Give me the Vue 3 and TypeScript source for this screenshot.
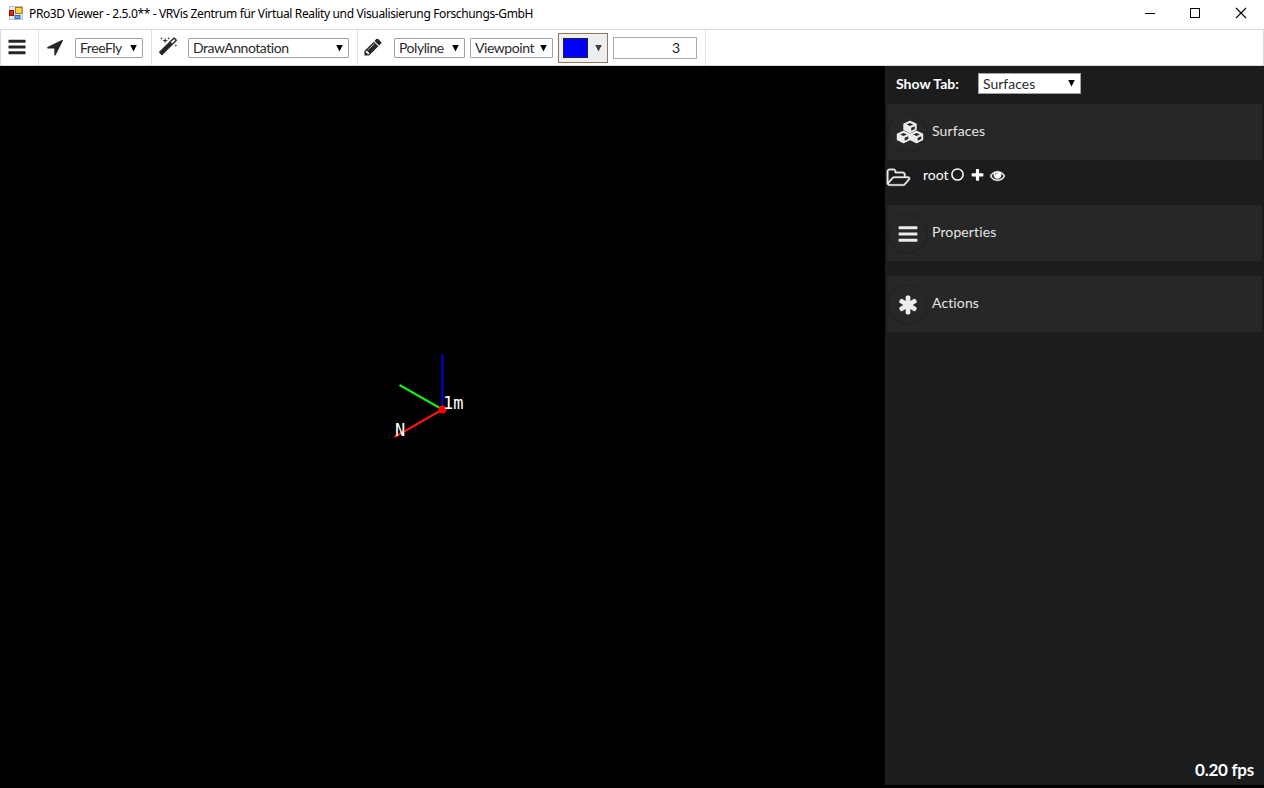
<script setup lang="ts">
interface Picker { label: string; width: number }
interface Section { title: string; icon: 'cubes' | 'bars' | 'asterisk' }

const title = 'PRo3D Viewer - 2.5.0** - VRVis Zentrum für Virtual Reality und Visualisierung Forschungs-GmbH'
const navigation: Picker = { label: 'FreeFly', width: 68 }
const interaction: Picker = { label: 'DrawAnnotation', width: 161 }
const drawing: Picker[] = [
  { label: 'Polyline', width: 71 },
  { label: 'Viewpoint', width: 83 },
]
const surfaces: Section = { title: 'Surfaces', icon: 'cubes' }
const others: Section[] = [
  { title: 'Properties', icon: 'bars' },
  { title: 'Actions', icon: 'asterisk' },
]

const bars = 'M1664 1344v128q0 26-19 45t-45 19h-1408q-26 0-45-19t-19-45v-128q0-26 19-45t45-19h1408q26 0 45 19t19 45zm0-512v128q0 26-19 45t-45 19h-1408q-26 0-45-19t-19-45v-128q0-26 19-45t45-19h1408q26 0 45 19t19 45zm0-512v128q0 26-19 45t-45 19h-1408q-26 0-45-19t-19-45v-128q0-26 19-45t45-19h1408q26 0 45 19t19 45z'
const arrow = 'M1593 349l-640 1280q-17 35-57 35-5 0-15-2-22-5-35.5-22.5t-13.5-39.5v-576h-576q-22 0-39.5-13.5t-22.5-35.5 4-42 29-30l1280-640q13-7 29-7 27 0 45 19 15 14 18.5 34.5t-6.5 39.5z'
const magic = 'M1254 581l293-293-107-107-293 293zm447-293q0 27-18 45l-1286 1286q-18 18-45 18t-45-18l-198-198q-18-18-18-45t18-45l1286-1286q18-18 45-18t45 18l198 198q18 18 18 45zm-1351-190l98 30-98 30-30 98-30-98-98-30 98-30 30-98zm350 162l196 60-196 60-60 196-60-196-196-60 196-60 60-196zm930 478l98 30-98 30-30 98-30-98-98-30 98-30 30-98zm-640-640l98 30-98 30-30 98-30-98-98-30 98-30 30-98z'
const pencil = 'M491 1536l91-91-235-235-91 91v107h128v128h107zm523-928q0-22-22-22-10 0-17 7l-542 542q-7 7-7 17 0 22 22 22 10 0 17-7l542-542q7-7 7-17zm-54-192l416 416-832 832h-416v-416zm683 96q0 53-37 90l-166 166-416-416 166-165q36-38 90-38 53 0 91 38l235 234q37 39 37 91z'
const asterisk = 'M1546 1050q46 26 59.5 77.5t-12.5 97.5l-64 110q-26 46-77.5 59.5t-97.5-12.5l-266-153v307q0 52-38 90t-90 38h-128q-52 0-90-38t-38-90v-307l-266 153q-46 26-97.5 12.5t-77.5-59.5l-64-110q-26-46-12.5-97.5t59.5-77.5l266-154-266-154q-46-26-59.5-77.5t12.5-97.5l64-110q26-46 77.5-59.5t97.5 12.5l266 153v-307q0-52 38-90t90-38h128q52 0 90 38t38 90v307l266-153q46-26 97.5-12.5t77.5 59.5l64 110q26 46 12.5 97.5t-59.5 77.5l-266 154z'
const folder = 'M1845 931q0-35-53-35h-1088q-40 0-85.5 21.5t-71.5 52.5l-294 363q-18 24-18 40 0 35 53 35h1088q40 0 86-22t71-53l294-363q18-22 18-39zm-1141-163h768v-160q0-40-28-68t-68-28h-576q-40 0-68-28t-28-68v-64q0-40-28-68t-68-28h-320q-40 0-68 28t-28 68v853l256-315q44-53 116-87.5t140-34.5zm1269 163q0 62-46 120l-295 363q-43 53-116 87.5t-140 34.5h-1088q-92 0-158-66t-66-158v-960q0-92 66-158t158-66h320q92 0 158 66t66 158v32h544q92 0 158 66t66 158v160h192q54 0 99 24.5t67 70.5q15 32 15 68z'
const plus = 'M1600 736v192q0 40-28 68t-68 28h-416v416q0 40-28 68t-68 28h-192q-40 0-68-28t-28-68v-416h-416q-40 0-68-28t-28-68v-192q0-40 28-68t68-28h416v-416q0-40 28-68t68-28h192q40 0 68 28t28 68v416h416q40 0 68 28t28 68z'
const eye = 'M1664 960q-152-236-381-353 61 104 61 225 0 185-131.5 316.5t-316.5 131.5-316.5-131.5-131.5-316.5q0-121 61-225-229 117-381 353 133 205 333.5 326.5t434.5 121.5 434.5-121.5 333.5-326.5zm-720-384q0-20-14-34t-34-14q-125 0-214.5 89.5t-89.5 214.5q0 20 14 34t34 14 34-14 14-34q0-86 61-147t147-61q20 0 34-14t14-34zm848 384q0 34-20 69-140 230-376.5 368.5t-499.5 138.5-499.5-139-376.5-368q-20-35-20-69t20-69q140-229 376.5-368t499.5-139 499.5 139 376.5 368q20 35 20 69z'
</script>

<template>
  <div class="window">
    <header class="titlebar">
      <svg class="app-icon" width="14" height="14" viewBox="0 0 14 14">
        <rect x="0.5" y="0.5" width="13" height="13" fill="#ededed" stroke="#bdbdbd" />
        <rect x="6.5" y="1.500" width="6.500" height="6" fill="#ffd04a" stroke="#a97b10" />
        <rect x="0.500" y="4.500" width="4" height="5" fill="#d9301c" stroke="#8d1207" />
        <rect x="6" y="9.500" width="5" height="3" fill="#6ba0f4" stroke="#2b66c8" />
      </svg>
      <span class="title">{{ title }}</span>
      <svg class="controls" width="104" height="12" viewBox="0 0 104 12">
        <path d="M1 6.500h10" stroke="#000" />
        <rect x="46.500" y="1.500" width="9" height="9" fill="none" stroke="#000" />
        <path d="M92 1l10 10M102 1l-10 10" stroke="#000" stroke-width="1.100" />
      </svg>
    </header>

    <nav class="toolbar">
      <div class="cell menu">
        <svg width="20" height="20" viewBox="0 0 1792 1792"><path :d="bars" /></svg>
      </div>
      <div class="cell nav">
        <svg width="20" height="20" viewBox="0 0 1792 1792"><path :d="arrow" /></svg>
        <div class="select" :style="{ width: navigation.width + 'px' }">
          <span>{{ navigation.label }}</span><i class="caret" />
        </div>
      </div>
      <div class="cell interact">
        <svg width="20" height="20" viewBox="0 0 1792 1792"><path :d="magic" /></svg>
        <div class="select" :style="{ width: interaction.width + 'px' }">
          <span>{{ interaction.label }}</span><i class="caret" />
        </div>
      </div>
      <div class="cell draw">
        <svg width="20" height="20" viewBox="0 0 1792 1792"><path :d="pencil" /></svg>
        <div v-for="p in drawing" :key="p.label" class="select" :style="{ width: p.width + 'px' }">
          <span>{{ p.label }}</span><i class="caret" />
        </div>
        <div class="color"><b class="swatch" /><i class="caret dim" /></div>
        <div class="number">3</div>
      </div>
    </nav>

    <main class="body">
      <section class="viewport">
        <svg class="axes" width="885" height="718" viewBox="0 66 885 718">
          <path d="M442.500 409V354" stroke="#0000c8" stroke-width="2.200" />
          <path d="M442.500 409.500L399.500 385" stroke="#18e818" stroke-width="2.200" />
          <path d="M442.500 409.500L394.500 437" stroke="#f01414" stroke-width="2.200" />
          <circle cx="442.500" cy="409.500" r="4" fill="#f00" />
          <text x="443" y="408.500">1m</text>
          <text x="395" y="435.500">N</text>
        </svg>
      </section>

      <aside class="side">
        <div class="tab-row">
          <span class="tab-label">Show Tab:</span>
          <div class="select tab"><span>Surfaces</span><i class="caret" /></div>
        </div>

        <div class="section">
          <span class="ring">
            <svg class="cubes" width="28" height="24" viewBox="0 0 28 24">
              <g v-for="(c, i) in [[8, 1.5], [1.5, 11.5], [14.500, 11.500]]" :key="i" :transform="`translate(${c[0]} ${c[1]})`">
                <path d="M6 0L12 2.600V8.200L6 11L0 8.200V2.600Z" fill="#ececec" stroke="#ececec" stroke-width="1.400" stroke-linejoin="round" />
                <path d="M6 1.600L9.400 3L6 4.400L2.600 3Z" fill="#272727" />
                <path d="M7.200 6.200L10.800 4.700V7.500L7.200 9.200Z" fill="#272727" />
              </g>
            </svg>
          </span>
          <span class="section-title">{{ surfaces.title }}</span>
        </div>

        <div class="tree">
          <svg class="folder" width="25" height="22" viewBox="0 0 2048 1792"><path :d="folder" /></svg>
          <span class="root">root</span>
          <svg class="circle" width="13" height="13" viewBox="0 0 13 13"><circle cx="6.500" cy="6.500" r="5.600" /></svg>
          <svg class="plus" width="15" height="15" viewBox="0 0 1792 1792"><path :d="plus" /></svg>
          <svg class="eye" width="15" height="15" viewBox="0 0 1792 1792"><path :d="eye" /></svg>
        </div>

        <div v-for="s in others" :key="s.title" class="section spaced">
          <span class="ring">
            <svg class="glyph" width="22" height="22" viewBox="0 0 1792 1792">
              <path :d="s.icon === 'bars' ? bars : asterisk" />
            </svg>
          </span>
          <span class="section-title">{{ s.title }}</span>
        </div>

        <div class="fps">0.20 fps</div>
      </aside>
    </main>
  </div>
</template>

<style>
body { margin: 0; background: #000; overflow: hidden; }
</style>

<style scoped>
.window { width: 1264px; height: 788px; display: flex; flex-direction: column; background: #000; font-family: Lato, "Open Sans", sans-serif; font-size: 14px; font-variant-ligatures: none; color: #1f1f1f; box-sizing: border-box; }
.window * { box-sizing: border-box; }
svg, i { flex: none; }

.titlebar { height: 29px; flex: none; display: flex; align-items: center; padding: 0 16px 3px 9px; background: #fff; }
.title { margin: 2px 0 0 6px; font: 12px/16px "Noto Sans", "Open Sans", sans-serif; letter-spacing: -0.37px; color: #000; white-space: nowrap; }
.controls { margin-left: auto; }

.toolbar { height: 37px; flex: none; display: flex; background: #fff; border: 1px solid #d9dadb; }
.cell { display: flex; align-items: center; border-right: 1px solid #e0e1e2; }
.cell svg { fill: #262626; margin-top: -1px; }
.menu { width: 38px; padding-left: 6px; }
.nav { width: 113px; padding-left: 6px; }
.nav .select { margin-left: 10px; }
.interact { width: 206px; padding-left: 6px; }
.interact .select { margin-left: 10px; }
.draw { width: 348px; padding-left: 5px; }
.draw .select { margin-left: 11px; }
.draw .select + .select { margin-left: 5px; }

.select { height: 20px; flex: none; display: flex; align-items: center; justify-content: space-between; padding: 0 5px 0 4px; border: 1px solid #a2a2a2; border-radius: 1px; background: #fff; line-height: 18px; color: #2b2b2b; }
.cell .select { letter-spacing: -0.45px; }
.caret { width: 7px; height: 7px; margin-top: 1px; background: #000; clip-path: polygon(0 0, 100% 0, 50% 100%); }
.dim { background: #3c3c3c; }
.color { width: 50px; height: 30px; margin-left: 5px; display: flex; align-items: center; justify-content: space-between; padding: 0 5px 0 4px; border: 1px solid #91765d; background: #eee; }
.swatch { width: 25px; height: 20px; border: 1px solid #222; background: #00f; }
.number { width: 84px; height: 22px; margin-left: 5px; padding-right: 16px; border: 1px solid #a9a9a9; line-height: 20px; text-align: right; }

.body { height: 719px; display: flex; }
.viewport { width: 885px; background: #000; }
.axes { display: block; }
.axes text { fill: #fff; font: 17px "DejaVu Sans Mono", monospace; }
.side { width: 379px; padding: 7px 2px 0; display: flex; flex-direction: column; background: #1b1c1e; color: #fff; }
.tab-row { display: flex; align-items: center; height: 21px; margin-bottom: 10px; padding-left: 9px; }
.tab-label { width: 82px; font-weight: 700; }
.tab { width: 103px; height: 21px; border-radius: 0; }
.tab span { margin-top: 1px; }
.tab .caret { margin-top: -1px; }
.section { height: 56px; flex: none; display: flex; align-items: center; background: #272727; color: #e6e6e6; }
.ring { width: 41px; height: 41px; display: flex; align-items: center; justify-content: center; border: 2px solid #232323; border-radius: 50%; }
.ring svg { fill: #ececec; }
.ring .cubes { position: relative; left: 2px; }
.ring .glyph { margin-top: 1px; }
.section-title { margin: -2px 0 0 4px; line-height: 18px; letter-spacing: 0.12px; }
.spaced { margin-bottom: 15px; }
.tree { height: 45px; flex: none; display: flex; align-items: flex-start; fill: #fff; padding-top: 6px; }
.folder { margin: 1px 0 0 -1px; fill: #e8e8e8; stroke: #e8e8e8; stroke-width: 30px; }
.root { margin-left: 12px; line-height: 18px; }
.circle { margin: 2px 0 0 2px; fill: none; stroke: #fff; stroke-width: 1.500px; }
.plus { margin: 2px 0 0 6px; }
.eye { margin: 2px 0 0 5px; stroke: #fff; stroke-width: 50px; }
.fps { margin: auto 8px 4px 0; text-align: right; font-size: 17px; line-height: 22px; font-weight: 700; letter-spacing: -0.25px; }
</style>
